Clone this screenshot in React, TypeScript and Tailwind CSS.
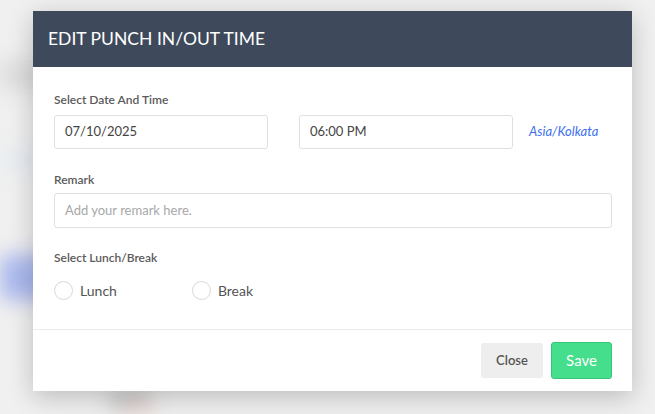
export default function App() {
  return (
    <div
      className="relative h-[414px] w-[655px] overflow-hidden bg-[#f0f0f0]"
      style={{ fontFamily: "Lato, 'Noto Sans', sans-serif" }}
    >
      {/* blurred page behind the modal */}
      <div className="absolute inset-0 blur-[10px]">
        <div className="absolute left-0 top-[60px] h-[30px] w-[60px] bg-[#dcdcdc]" />
        <div className="absolute left-0 top-[150px] h-[20px] w-[60px] bg-[#e6ecf2]" />
        <div className="absolute left-0 top-[255px] h-[45px] w-[70px] bg-[#aab8ee]" />
        <div className="absolute left-[110px] top-[390px] h-[20px] w-[40px] bg-[#c8c8c8]" />
        <div className="absolute left-[125px] top-[405px] h-[10px] w-[30px] bg-[#f3d8d4]" />
      </div>

      <div className="relative ml-[33px] mt-[11px] w-[599px] bg-white shadow-[0_6px_24px_rgba(0,0,0,0.22)]">
        <header className="flex h-[56px] items-center bg-[#3e4a5c] px-[15px]">
          <h2 className="text-[17.5px] font-normal text-white">EDIT PUNCH IN/OUT TIME</h2>
        </header>

        <div className="px-[21px] pt-[24px] pb-[28px]">
          <p className="text-[12px] font-semibold text-[#5a5a5a]">Select Date And Time</p>
          <div className="mt-[6px] flex items-center">
            <div className="flex h-[34px] w-[214px] items-center rounded-[3px] border border-[#e0e0e0] px-[10px] text-[13px] text-[#444]">
              07/10/2025
            </div>
            <div className="ml-[31px] flex h-[34px] w-[214px] items-center rounded-[3px] border border-[#e0e0e0] px-[10px] text-[13px] text-[#444]">
              06:00 PM
            </div>
            <span className="ml-[16px] text-[13px] italic text-[#3d6ff0]">Asia/Kolkata</span>
          </div>

          <p className="mt-[22px] text-[12px] font-semibold text-[#5a5a5a]">Remark</p>
          <div className="mt-[4px] flex h-[35px] w-[558px] items-center rounded-[3px] border border-[#e0e0e0] px-[10px] text-[13px] text-[#a8a8a8]">
            Add your remark here.
          </div>

          <p className="mt-[21px] text-[12px] font-semibold text-[#5a5a5a]">Select Lunch/Break</p>
          <div className="mt-[13px] flex items-center">
            <label className="flex items-center gap-[7px]">
              <span className="h-[19px] w-[19px] rounded-full border border-[#d8d8d8]" />
              <span className="text-[14px] text-[#555]">Lunch</span>
            </label>
            <label className="ml-[75px] flex items-center gap-[7px]">
              <span className="h-[19px] w-[19px] rounded-full border border-[#d8d8d8]" />
              <span className="text-[14px] text-[#555]">Break</span>
            </label>
          </div>
        </div>

        <footer className="flex h-[62px] items-center justify-end gap-[8px] border-t border-[#ebebeb] pr-[20px]">
          <button className="h-[35px] w-[62px] rounded-[3px] bg-[#eeeeee] text-[13px] font-semibold text-[#555]">
            Close
          </button>
          <button className="h-[37px] w-[61px] rounded-[3px] border border-[#34c77a] bg-[#44de8c] text-[15px] text-white">
            Save
          </button>
        </footer>
      </div>
    </div>
  );
}
